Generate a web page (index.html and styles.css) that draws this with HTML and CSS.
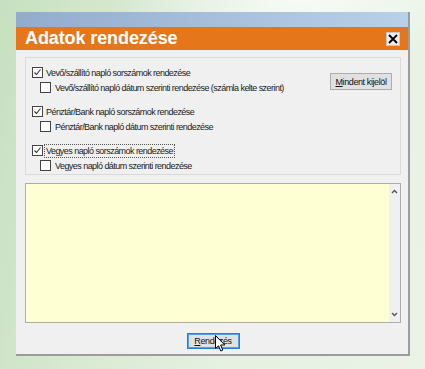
FILE: index.html
```html
<!DOCTYPE html>
<html lang="hu">
<head>
<meta charset="utf-8">
<link rel="stylesheet" href="styles.css">
</head>
<body>
<div class="window">
  <div class="topstrip"></div>
  <div class="titlebar">
    <span class="title">Adatok rendezése</span>
    <span class="close">
      <svg width="10" height="10" viewBox="0 0 10 10"><path d="M1 1L9 9M9 1L1 9" stroke="#000" stroke-width="1.8" fill="none"/></svg>
    </span>
  </div>
  <div class="content">
    <div class="groupbox">
      <div class="options">
        <div class="group">
          <label class="row"><span class="cb checked"><svg width="9" height="9" viewBox="0 0 9 9"><path d="M1.5 4.5L3.5 6.5L7.5 1.5" stroke="#333" stroke-width="1.1" fill="none"/></svg></span><span class="lbl">Vevő/szállító napló sorszámok rendezése</span></label>
          <label class="row sub"><span class="cb"></span><span class="lbl">Vevő/szállító napló dátum szerinti rendezése (számla kelte szerint)</span></label>
        </div>
        <div class="group">
          <label class="row"><span class="cb checked"><svg width="9" height="9" viewBox="0 0 9 9"><path d="M1.5 4.5L3.5 6.5L7.5 1.5" stroke="#333" stroke-width="1.1" fill="none"/></svg></span><span class="lbl">Pénztár/Bank napló sorszámok rendezése</span></label>
          <label class="row sub"><span class="cb"></span><span class="lbl">Pénztár/Bank napló dátum szerinti rendezése</span></label>
        </div>
        <div class="group">
          <label class="row"><span class="cb checked"><svg width="9" height="9" viewBox="0 0 9 9"><path d="M1.5 4.5L3.5 6.5L7.5 1.5" stroke="#333" stroke-width="1.1" fill="none"/></svg></span><span class="lbl focus">Vegyes napló sorszámok rendezése</span></label>
          <label class="row sub"><span class="cb"></span><span class="lbl">Vegyes napló dátum szerinti rendezése</span></label>
        </div>
      </div>
      <button class="btn select-all"><u>M</u>indent kijelöl</button>
    </div>
    <div class="memo">
      <div class="memo-area"></div>
      <div class="scrollbar">
        <svg width="7" height="5" viewBox="0 0 7 5"><path d="M1 4L3.5 1.5L6 4" stroke="#555" stroke-width="1.4" fill="none"/></svg>
        <svg width="7" height="5" viewBox="0 0 7 5"><path d="M1 1L3.5 3.5L6 1" stroke="#555" stroke-width="1.4" fill="none"/></svg>
      </div>
    </div>
    <div class="actions">
      <button class="btn primary"><u>R</u>endezés</button>
      <svg class="cursor" width="12" height="18" viewBox="0 0 12 18"><path d="M0.5 0.5L0.5 13.5L3.5 10.8L5.8 16L7.8 15.1L5.6 10L9.8 10Z" fill="#fff" stroke="#000" stroke-width="1"/></svg>
    </div>
  </div>
</div>
</body>
</html>
```
FILE: styles.css
```css
html, body {
  margin: 0;
  padding: 0;
}
body {
  width: 425px;
  height: 369px;
  overflow: hidden;
  background:
    radial-gradient(ellipse 180px 60px at 300px 0px, rgba(255,255,255,0.7), rgba(255,255,255,0) 100%),
    linear-gradient(100deg, #c7e0bf 0%, #d9ead3 30%, #e6f1e2 60%, #eaf3e6 100%);
  font-family: "Liberation Sans", Arial, sans-serif;
}
.window {
  margin: 12px 0 0 16px;
  width: 394px;
  height: 344px;
  box-sizing: border-box;
  background: #f0f0f0;
  border-right: 2px solid #9c9c9c;
  border-bottom: 2px solid #9c9c9c;
  display: flex;
  flex-direction: column;
}
.topstrip {
  height: 15px;
  background: linear-gradient(90deg, #93acce 0%, #a6bfdc 50%, #b7d1ea 100%);
}
.titlebar {
  height: 23px;
  background: #e5771a;
  display: flex;
  align-items: center;
  justify-content: space-between;
  padding: 0 8px 0 9px;
}
.title {
  color: #fff;
  font-weight: bold;
  font-size: 18px;
  line-height: 23px;
  letter-spacing: -0.1px;
}
.close {
  width: 14px;
  height: 14px;
  box-sizing: border-box;
  background: #ececec;
  border: 1px solid #c8c8c8;
  display: flex;
  align-items: center;
  justify-content: center;
}
.content {
  flex: 1;
  padding: 7px 7px 0 9px;
  display: flex;
  flex-direction: column;
}
.groupbox {
  height: 118px;
  box-sizing: border-box;
  border: 1px solid #dadada;
  display: flex;
  justify-content: space-between;
  align-items: flex-start;
  padding: 7px 8px 0 6px;
}
.options {
  display: flex;
  flex-direction: column;
  gap: 9px;
}
.group {
  display: flex;
  flex-direction: column;
}
.row {
  height: 15px;
  display: flex;
  align-items: center;
  gap: 1px;
  font-size: 9px;
  letter-spacing: -0.55px;
  color: #1a1a1a;
}
.row.sub {
  padding-left: 8px;
  gap: 2px;
}
.cb {
  width: 11px;
  height: 11px;
  box-sizing: border-box;
  border: 1px solid #444;
  background: #fff;
  display: flex;
  align-items: center;
  justify-content: center;
}
.lbl {
  padding: 1px 1px;
  border: 1px solid transparent;
}
.lbl.focus {
  border: 1px dotted #555;
}
.btn {
  font-family: "Liberation Sans", Arial, sans-serif;
  font-size: 9px;
  letter-spacing: -0.4px;
  color: #111;
  background: #e1e1e1;
  border: 1px solid #adadad;
  padding: 0;
  margin: 0;
  box-sizing: border-box;
}
.select-all {
  width: 62px;
  height: 17px;
  margin-top: 8px;
}
.memo {
  margin-top: 8px;
  height: 140px;
  box-sizing: border-box;
  border: 1px solid #acacac;
  display: flex;
}
.memo-area {
  flex: 1;
  background: #ffffd4;
}
.scrollbar {
  width: 11px;
  background: #f0f0f0;
  display: flex;
  flex-direction: column;
  justify-content: space-between;
  align-items: center;
  padding: 5px 0 5px;
}
.actions {
  position: relative;
  display: flex;
  justify-content: center;
  padding-top: 10px;
}
.primary {
  width: 53px;
  height: 16px;
  border: 1px solid #1a7fe0;
  box-shadow: inset 0 0 0 1px #4ea3f0;
}
.cursor {
  position: absolute;
  left: 190px;
  top: 12px;
}
```
